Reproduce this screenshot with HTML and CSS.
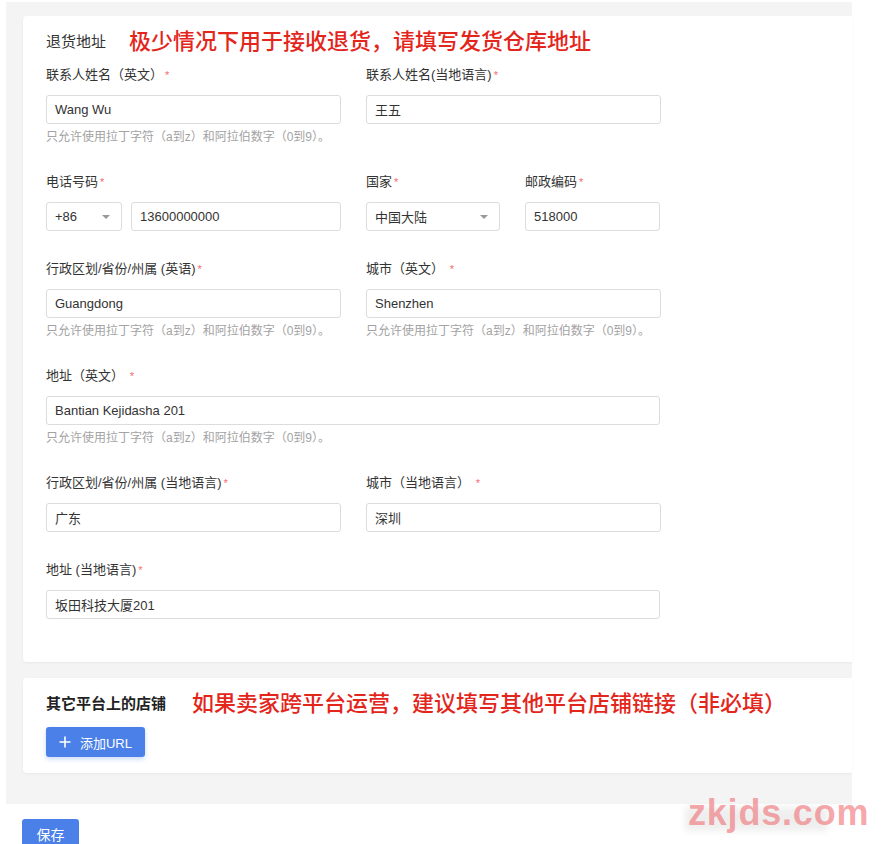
FILE: index.html
```html
<!DOCTYPE html>
<html lang="zh-CN">
<head>
    <meta charset="UTF-8">
    <meta name="viewport" content="width=device-width, initial-scale=1.0">
    <title>退货地址</title>
    <link rel="stylesheet" href="styles.css">
</head>
<body>
    <div class="page">
        <div class="card">
            <div class="card-head">
                <span class="card-title">退货地址</span>
                <span class="note">极少情况下用于接收退货，请填写发货仓库地址</span>
            </div>

            <div class="row">
                <div class="field">
                    <label>联系人姓名（英文）<i class="req">*</i></label>
                    <div class="input">Wang Wu</div>
                    <p class="hint">只允许使用拉丁字符（a到z）和阿拉伯数字（0到9）。</p>
                </div>
                <div class="field">
                    <label>联系人姓名(当地语言)<i class="req">*</i></label>
                    <div class="input">王五</div>
                </div>
            </div>

            <div class="row">
                <div class="field">
                    <label>电话号码<i class="req">*</i></label>
                    <div class="phone">
                        <div class="input select code">+86<span class="caret"></span></div>
                        <div class="input grow">13600000000</div>
                    </div>
                </div>
                <div class="field country">
                    <label>国家<i class="req">*</i></label>
                    <div class="input select">中国大陆<span class="caret"></span></div>
                </div>
                <div class="field postal">
                    <label>邮政编码<i class="req">*</i></label>
                    <div class="input">518000</div>
                </div>
            </div>

            <div class="row">
                <div class="field">
                    <label>行政区划/省份/州属 (英语)<i class="req">*</i></label>
                    <div class="input">Guangdong</div>
                    <p class="hint">只允许使用拉丁字符（a到z）和阿拉伯数字（0到9）。</p>
                </div>
                <div class="field">
                    <label>城市（英文） <i class="req">*</i></label>
                    <div class="input">Shenzhen</div>
                    <p class="hint">只允许使用拉丁字符（a到z）和阿拉伯数字（0到9）。</p>
                </div>
            </div>

            <div class="row">
                <div class="field wide">
                    <label>地址（英文） <i class="req">*</i></label>
                    <div class="input">Bantian Kejidasha 201</div>
                    <p class="hint">只允许使用拉丁字符（a到z）和阿拉伯数字（0到9）。</p>
                </div>
            </div>

            <div class="row">
                <div class="field">
                    <label>行政区划/省份/州属 (当地语言)<i class="req">*</i></label>
                    <div class="input">广东</div>
                </div>
                <div class="field">
                    <label>城市（当地语言） <i class="req">*</i></label>
                    <div class="input">深圳</div>
                </div>
            </div>

            <div class="row">
                <div class="field wide">
                    <label>地址 (当地语言)<i class="req">*</i></label>
                    <div class="input">坂田科技大厦201</div>
                </div>
            </div>
        </div>

        <div class="card card-shops">
            <div class="card-head">
                <span class="card-title strong">其它平台上的店铺</span>
                <span class="note">如果卖家跨平台运营，建议填写其他平台店铺链接（非必填）</span>
            </div>
            <button class="btn btn-add">
                <svg width="12" height="12" viewBox="0 0 12 12"><path d="M6 0.5v11M0.5 6h11" stroke="#fff" stroke-width="1.6" fill="none"/></svg>
                添加URL
            </button>
        </div>
    </div>

    <button class="btn btn-save">保存</button>

    <div class="watermark">
        <span class="smudge"></span>
        <span class="mark">zkjds.com</span>
    </div>
</body>
</html>
```

FILE: styles.css
```css
body {
    margin: 0;
    background: #fff;
    font-family: "Liberation Sans", "Noto Sans CJK SC", sans-serif;
    color: #333;
    font-size: 13px;
    position: relative;
    height: 844px;
    overflow: hidden;
}

.page {
    margin: 2px 0 0 6px;
    width: 846px;
    background: #f4f4f5;
    padding: 14px 0 31px 17px;
    box-sizing: border-box;
}

.card {
    background: #fff;
    border-radius: 4px 0 0 4px;
    box-shadow: 0 1px 3px rgba(0, 0, 0, 0.05);
    padding: 16px 0 15px 23px;
}

.card-shops {
    margin-top: 16px;
    padding-bottom: 16px;
}

.card-head {
    display: flex;
    align-items: center;
    height: 20px;
    margin-bottom: 13px;
}

.card-title {
    font-size: 15px;
    color: #333;
    line-height: 20px;
}

.card-title.strong {
    font-weight: 600;
    color: #222;
}

.note {
    font-size: 22px;
    line-height: 20px;
    font-weight: 500;
    color: #e3261c;
    margin-left: 23px;
    white-space: nowrap;
}

.card-shops .note {
    margin-left: 26px;
}

.row {
    display: flex;
    gap: 25px;
}

.field {
    width: 295px;
    margin-bottom: 28px;
}

.field.wide {
    width: 614px;
}

.field.country {
    width: 134px;
}

.field.postal {
    width: 135px;
}

label {
    display: block;
    height: 20px;
    line-height: 20px;
    margin-bottom: 10px;
    font-size: 13px;
    color: #333;
    white-space: nowrap;
}

.req {
    font-style: normal;
    color: #f56c6c;
    font-size: 11px;
    line-height: 1;
    margin-left: 2px;
}

.input {
    height: 29px;
    box-sizing: border-box;
    border: 1px solid #dcdcdc;
    border-radius: 3px;
    padding: 0 8px;
    display: flex;
    align-items: center;
    font-size: 13px;
    color: #333;
    background: #fff;
}

.select {
    justify-content: space-between;
}

.caret {
    width: 0;
    height: 0;
    border-left: 4px solid transparent;
    border-right: 4px solid transparent;
    border-top: 4px solid #999;
    margin-right: 3px;
}

.phone {
    display: flex;
    gap: 9px;
}

.code {
    width: 76px;
    flex: none;
}

.grow {
    flex: 1;
}

.hint {
    margin: 4px 0 -2px;
    height: 18px;
    line-height: 18px;
    font-size: 12px;
    color: #a3a3a3;
    white-space: nowrap;
}

.btn {
    border: none;
    background: #4a80e8;
    color: #fff;
    font-family: inherit;
    font-size: 13px;
    border-radius: 3px;
    height: 30px;
    cursor: pointer;
}

.btn-add {
    width: 99px;
    display: flex;
    align-items: center;
    justify-content: center;
    gap: 9px;
    padding: 0;
    box-shadow: 0 2px 5px rgba(74, 128, 232, 0.3);
}

.btn-save {
    display: block;
    margin: 15px 0 0 22px;
    width: 57px;
    padding: 0;
    font-size: 14px;
}

.watermark {
    position: absolute;
    left: 683px;
    top: 795px;
    width: 200px;
    height: 45px;
}

.smudge {
    position: absolute;
    left: 2px;
    top: 12px;
    width: 143px;
    height: 24px;
    background: #ebebeb;
    filter: blur(3px);
    opacity: 0.8;
}

.mark {
    position: absolute;
    left: 5px;
    top: -3px;
    font-family: "Liberation Sans", sans-serif;
    font-weight: bold;
    font-size: 36px;
    color: rgba(240, 110, 115, 0.6);
    letter-spacing: 0.8px;
}
```
